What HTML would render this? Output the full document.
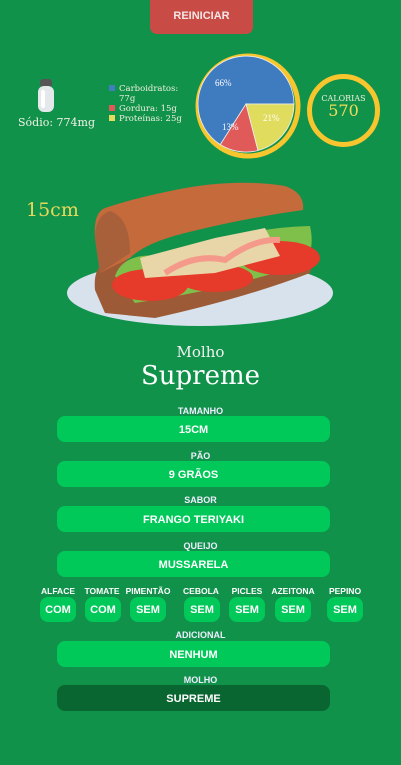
<!DOCTYPE html>
<html><head><meta charset="utf-8"><style>
*{margin:0;padding:0;box-sizing:border-box}
body{width:401px;height:765px;background:#11924a;position:relative;overflow:hidden;font-family:"Liberation Sans",sans-serif;color:#fff}
.abs{position:absolute}
.reset{left:150px;top:0;width:103px;height:34px;background:#c94b45;border-radius:0 0 7px 7px;font-weight:bold;font-size:11px;text-align:center;line-height:32px;color:#f4e6e6}
.serif{font-family:"DejaVu Serif","Liberation Serif",serif}
.lbl{font-size:9px;font-weight:bold;text-align:center;width:401px;left:0;color:#eef}
.btn{left:57px;width:273px;height:26px;background:#00c95a;border-radius:8px;text-align:center;line-height:29px;font-weight:bold;font-size:11px}
.sb{width:36px;height:25px;background:#00c95a;border-radius:8px;text-align:center;line-height:27px;font-weight:bold;font-size:11px;top:597px}
.sl{font-size:8.5px;font-weight:bold;top:586px;text-align:center;width:60px}
.leg{font-size:8.5px;line-height:10px;color:#f0f0e0}
.sq{display:inline-block;width:6px;height:6px;margin-right:4px}
</style></head><body>
<div class="abs reset">REINICIAR</div>

<svg class="abs" style="left:35px;top:78px" width="22" height="36" viewBox="0 0 22 36">
<rect x="5" y="1" width="12" height="8" rx="3" fill="#555"/>
<rect x="3" y="8" width="16" height="26" rx="6" fill="#e4e8ea"/>
<rect x="6" y="12" width="4" height="18" rx="2" fill="#fff"/>
</svg>
<div class="abs serif" style="left:18px;top:116px;font-size:11px;color:#f2f2e8">Sódio: 774mg</div>

<div class="abs leg serif" style="left:109px;top:84px">
<div><span class="sq" style="background:#3f7fc0"></span>Carboidratos:</div>
<div style="padding-left:10px">77g</div>
<div><span class="sq" style="background:#e05a5a"></span>Gordura: 15g</div>
<div><span class="sq" style="background:#e4dc5c"></span>Proteínas: 25g</div>
</div>

<svg class="abs" style="left:190px;top:48px" width="115" height="115" viewBox="190 48 115 115">
<circle cx="248" cy="106" r="50" fill="none" stroke="#f7c62f" stroke-width="5"/>
<path d="M246 104 L294 104 A48 48 0 1 0 220.3 144.6 Z" fill="#3f7bbf" stroke="#eee" stroke-width="0.8"/>
<path d="M246 104 L220.3 144.6 A48 48 0 0 0 258 150.5 Z" fill="#e05a5a" stroke="#eee" stroke-width="0.8"/>
<path d="M246 104 L258 150.5 A48 48 0 0 0 294 104 Z" fill="#e0dc5e" stroke="#eee" stroke-width="0.8"/>
<text x="215" y="86" font-size="9" fill="#fff" font-family="Liberation Serif">66%</text>
<text x="222" y="130" font-size="9" fill="#fff" font-family="Liberation Serif">13%</text>
<text x="263" y="121" font-size="9" fill="#fff" font-family="Liberation Serif">21%</text>
</svg>

<div class="abs" style="left:307px;top:74px;width:73px;height:73px;border:5px solid #f7c62f;border-radius:50%"></div>
<div class="abs serif" style="left:307px;top:94px;width:73px;text-align:center;font-size:8px;color:#f0f0e0">CALORIAS</div>
<div class="abs serif" style="left:307px;top:101px;width:73px;text-align:center;font-size:16px;color:#f0dc5a">570</div>

<div class="abs serif" style="left:26px;top:199px;font-size:19px;color:#e8d85a">15cm</div>

<svg class="abs" style="left:65px;top:178px" width="280" height="150" viewBox="0 0 280 150">
<ellipse cx="135" cy="115" rx="133" ry="33" fill="#d8e2ec"/>
<path d="M30 112 Q28 90 40 85 L240 60 Q250 80 245 95 Q180 120 90 140 L40 135 Z" fill="#9c5a36"/>
<path d="M50 98 Q60 70 110 80 Q170 50 245 48 Q250 70 240 85 Q170 110 70 125 Z" fill="#7ec04a"/>
<ellipse cx="85" cy="107" rx="38" ry="16" fill="#e63a2a"/>
<ellipse cx="150" cy="100" rx="38" ry="14" fill="#e63a2a"/>
<ellipse cx="215" cy="80" rx="40" ry="17" fill="#e63a2a"/>
<path d="M75 80 L150 60 L200 50 L215 78 L150 95 L80 100 Z" fill="#e8d6a8"/>
<path d="M100 95 Q130 75 160 82 Q190 60 215 62" stroke="#f59a8a" stroke-width="6" fill="none"/>
<path d="M30 60 Q28 35 40 30 Q70 20 110 12 Q170 0 220 8 Q240 15 238 32 Q180 40 120 55 Q80 65 65 80 L35 95 Z" fill="#c56a3a"/>
<path d="M30 60 Q30 38 45 33 Q65 40 65 75 L35 95 Z" fill="#a8603a"/>
</svg>

<div class="abs serif" style="left:0;width:401px;text-align:center;top:343px;font-size:15px;color:#f2f2f2">Molho</div>
<div class="abs serif" style="left:0;width:401px;text-align:center;top:361px;font-size:26px;color:#fff">Supreme</div>

<div class="abs lbl" style="top:406px">TAMANHO</div>
<div class="abs btn" style="top:416px">15CM</div>
<div class="abs lbl" style="top:451px">PÃO</div>
<div class="abs btn" style="top:461px">9 GRÃOS</div>
<div class="abs lbl" style="top:495px">SABOR</div>
<div class="abs btn" style="top:506px">FRANGO TERIYAKI</div>
<div class="abs lbl" style="top:541px">QUEIJO</div>
<div class="abs btn" style="top:551px">MUSSARELA</div>

<div class="abs sl" style="left:28px">ALFACE</div><div class="abs sb" style="left:40px">COM</div>
<div class="abs sl" style="left:72px">TOMATE</div><div class="abs sb" style="left:85px">COM</div>
<div class="abs sl" style="left:118px">PIMENTÃO</div><div class="abs sb" style="left:130px">SEM</div>
<div class="abs sl" style="left:171px">CEBOLA</div><div class="abs sb" style="left:184px">SEM</div>
<div class="abs sl" style="left:217px">PICLES</div><div class="abs sb" style="left:229px">SEM</div>
<div class="abs sl" style="left:263px">AZEITONA</div><div class="abs sb" style="left:275px">SEM</div>
<div class="abs sl" style="left:315px">PEPINO</div><div class="abs sb" style="left:327px">SEM</div>

<div class="abs lbl" style="top:630px">ADICIONAL</div>
<div class="abs btn" style="top:641px">NENHUM</div>
<div class="abs lbl" style="top:675px">MOLHO</div>
<div class="abs btn" style="top:685px;background:#0a6630">SUPREME</div>
</body></html>
